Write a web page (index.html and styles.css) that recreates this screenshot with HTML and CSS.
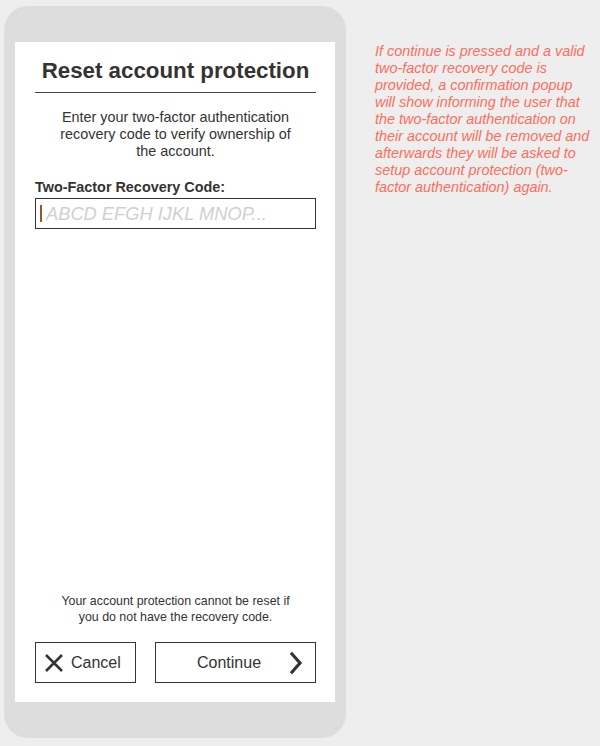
FILE: index.html
```html
<!DOCTYPE html>
<html>
<head>
<meta charset="utf-8">
<link rel="stylesheet" href="styles.css">
</head>
<body>
<div class="page">
  <div class="phone">
    <div class="screen">
      <h1 class="title">Reset account protection</h1>
      <p class="desc">Enter your two-factor authentication<br>recovery code to verify ownership of<br>the account.</p>
      <label class="label">Two-Factor Recovery Code:</label>
      <div class="input"><span class="caret"></span><span class="placeholder">ABCD EFGH IJKL MNOP...</span></div>
      <div class="spacer"></div>
      <p class="warn">Your account protection cannot be reset if<br>you do not have the recovery code.</p>
      <div class="buttons">
        <div class="btn cancel">
          <svg class="x-icon" width="18" height="18" viewBox="0 0 18 18"><path d="M1 1 L17 17 M17 1 L1 17" stroke="#333" stroke-width="2.5" fill="none"/></svg>
          <span>Cancel</span>
        </div>
        <div class="btn continue">
          <span>Continue</span>
          <svg class="chev" width="14" height="22" viewBox="0 0 14 22"><path d="M3 2 L11 11 L3 20" stroke="#333" stroke-width="3.2" fill="none" stroke-linecap="square"/></svg>
        </div>
      </div>
    </div>
  </div>
  <p class="note">If continue is pressed and a valid two-factor recovery code is provided, a confirmation popup will show informing the user that the two-factor authentication on their account will be removed and afterwards they will be asked to setup account protection (two-factor authentication) again.</p>
</div>
</body>
</html>
```

FILE: styles.css
```css
html, body {
  margin: 0;
  padding: 0;
  background: #eeeeee;
  font-family: "Liberation Sans", Arial, sans-serif;
  color: #333;
}
.page {
  display: flex;
  align-items: flex-start;
  padding: 6px 0 0 4px;
}
.phone {
  width: 342px;
  height: 732px;
  background: #dddddd;
  border-radius: 24px;
  padding: 36px 11px;
  box-sizing: border-box;
  flex-shrink: 0;
}
.screen {
  background: #fff;
  height: 660px;
  box-sizing: border-box;
  padding: 0 19px 19px 20px;
  display: flex;
  flex-direction: column;
}
.title {
  margin: 0;
  padding: 16px 0 8px;
  font-size: 22.3px;
  font-weight: bold;
  text-align: center;
  line-height: 26px;
  color: #333;
  border-bottom: 1px solid #444;
}
.desc {
  margin: 16px 0 0;
  font-size: 14.4px;
  line-height: 17px;
  text-align: center;
  color: #333;
}
.label {
  display: block;
  margin-top: 19px;
  font-size: 14.4px;
  font-weight: bold;
  line-height: 17px;
  color: #333;
}
.input {
  margin-top: 2px;
  height: 31px;
  box-sizing: border-box;
  border: 1px solid #333;
  display: flex;
  align-items: center;
  padding-left: 4px;
}
.caret {
  width: 2px;
  height: 17px;
  background: #a0522d;
  margin-right: 4px;
}
.placeholder {
  font-style: italic;
  font-size: 18.3px;
  color: #d0d0d0;
}
.spacer {
  flex: 1;
}
.warn {
  margin: 0;
  font-size: 12.4px;
  line-height: 16px;
  text-align: center;
  color: #333;
}
.buttons {
  display: flex;
  gap: 19px;
  margin-top: 17px;
}
.btn {
  height: 41px;
  box-sizing: border-box;
  border: 1px solid #333;
  display: flex;
  align-items: center;
  font-size: 16px;
  color: #333;
}
.cancel {
  width: 101px;
  padding-left: 9px;
  gap: 8px;
}
.continue {
  flex: 1;
  justify-content: space-between;
  padding: 0 12px 0 41px;
}
.note {
  margin: 37px 0 0 29px;
  width: 219px;
  font-size: 14.4px;
  line-height: 17px;
  font-style: italic;
  color: #ff6d5c;
}
```
